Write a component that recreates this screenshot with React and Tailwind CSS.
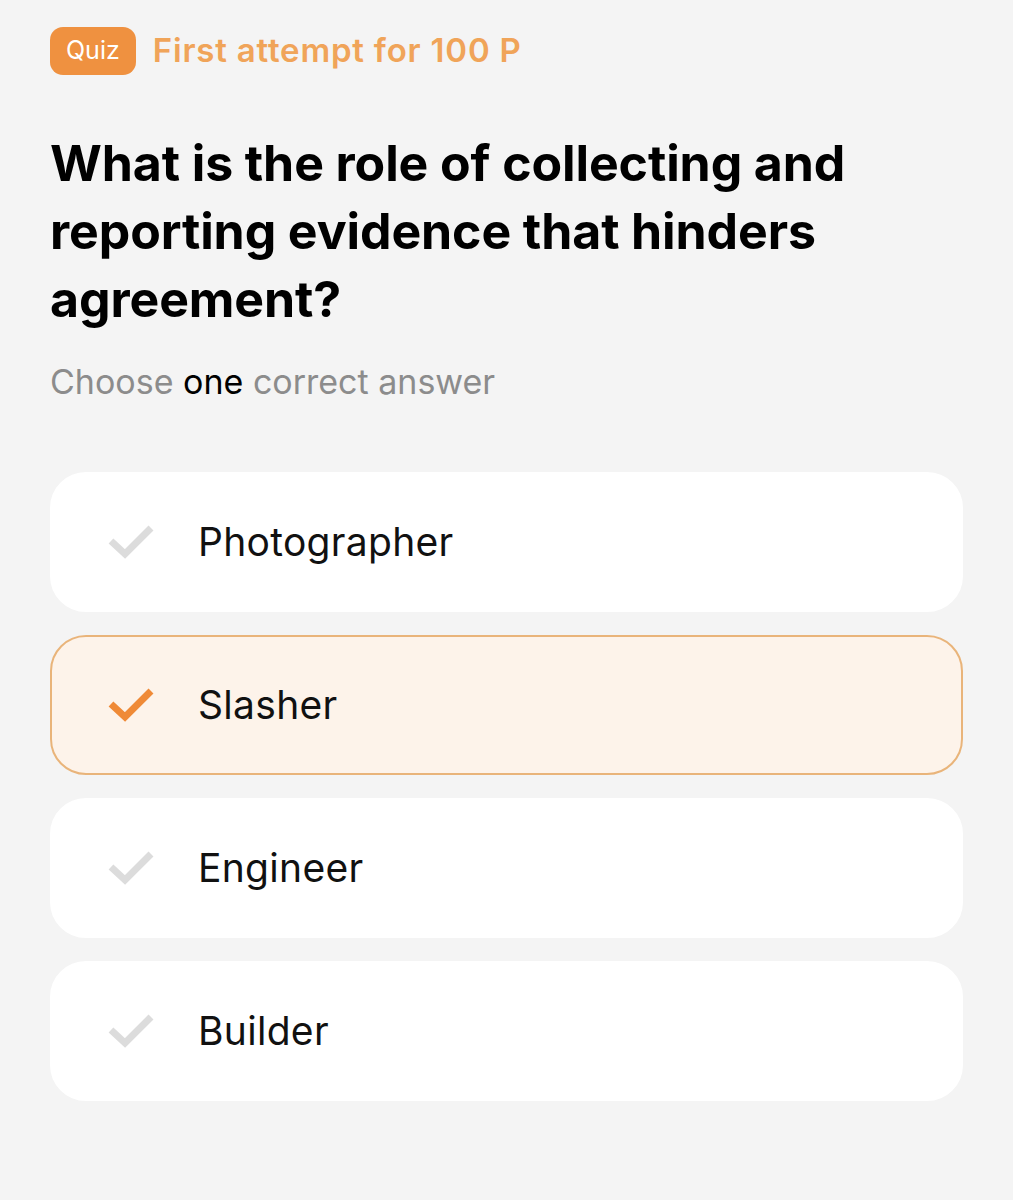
import React from "react";

function CheckIcon({ color }) {
  return (
    <svg width="46" height="36" viewBox="0 0 46 36" fill="none">
      <polyline points="3,17 17,30 43,4" stroke={color} strokeWidth="7" strokeLinecap="butt" strokeLinejoin="miter" fill="none" />
    </svg>
  );
}

function Option({ label, selected }) {
  return (
    <div
      className={
        "flex items-center h-[140px] rounded-[36px] pl-[56px] " +
        (selected ? "bg-[#fdf3ea] border-2 border-[#e9b47a]" : "bg-white border-2 border-white")
      }
    >
      <CheckIcon color={selected ? "#ef8a37" : "#dcdcdc"} />
      <span className="ml-[44px] text-[39px] tracking-[0.3px] text-[#111] font-normal leading-none">{label}</span>
    </div>
  );
}

export default function App() {
  return (
    <div className="min-h-[1200px] w-[1013px] bg-[#f4f4f4] px-[50px] pt-[26px]" style={{ fontFamily: "Inter, 'Noto Sans', sans-serif" }}>
      <div className="flex items-center">
        <span className="h-[48px] px-[16px] rounded-[13px] bg-[#ef9140] text-white text-[25px] flex items-center">Quiz</span>
        <span className="ml-[17px] text-[33px] font-semibold text-[#f0a459] tracking-[0.8px]">First attempt for 100 P</span>
      </div>
      <h1 className="mt-[53px] text-[50px] font-bold leading-[68px] text-black tracking-[-0.1px] w-[900px]">
        What is the role of collecting and
        <br />
        reporting evidence that hinders
        <br />
        agreement?
      </h1>
      <p className="mt-[29px] text-[34px] leading-[40px] text-[#8c8c8c]">
        Choose <span className="text-black">one</span> correct answer
      </p>
      <div className="mt-[70px] flex flex-col gap-[23px] w-[913px]">
        <Option label="Photographer" />
        <Option label="Slasher" selected />
        <Option label="Engineer" />
        <Option label="Builder" />
      </div>
    </div>
  );
}
